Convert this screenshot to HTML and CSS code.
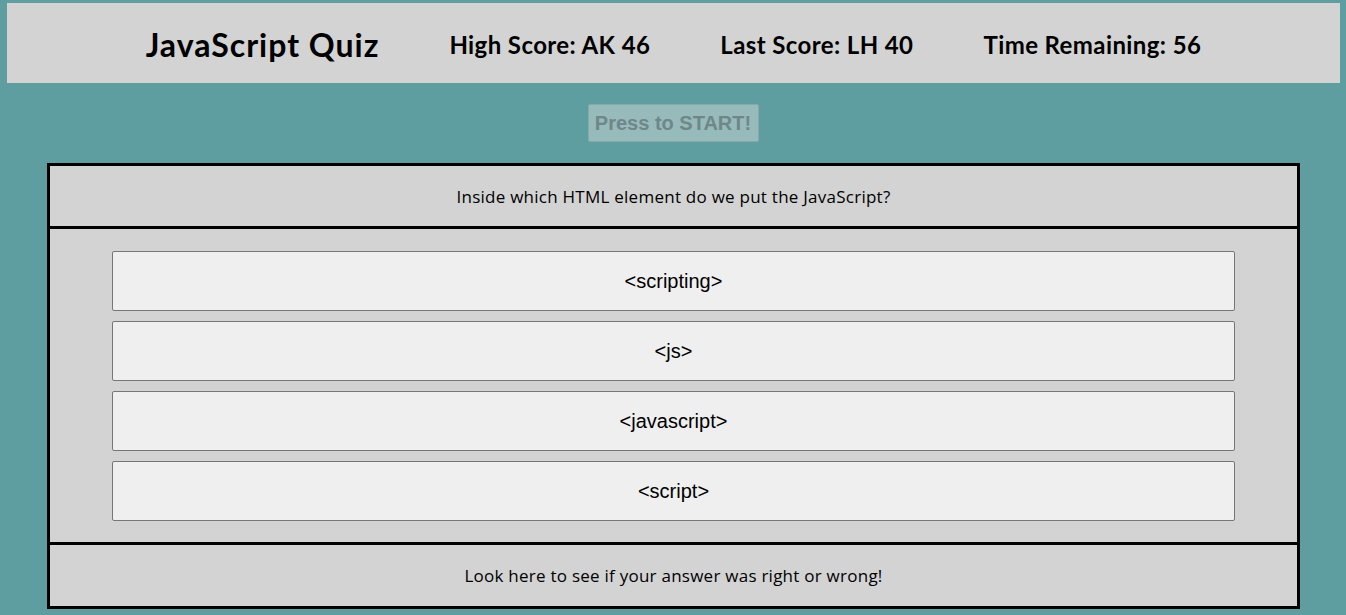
FILE: index.html
```html
<!DOCTYPE html>
<html lang="en">
<head>
<meta charset="utf-8">
<title>JavaScript Quiz</title>
<link rel="stylesheet" href="styles.css">
</head>
<body>
<header class="top-bar">
  <h1 class="title">JavaScript Quiz</h1>
  <div class="stat">High Score: AK 46</div>
  <div class="stat">Last Score: LH 40</div>
  <div class="stat">Time Remaining: 56</div>
</header>
<div class="start-row">
  <button class="start-btn" disabled>Press to START!</button>
</div>
<main class="quiz">
  <section class="question">Inside which HTML element do we put the JavaScript?</section>
  <section class="answers">
    <button class="answer">&lt;scripting&gt;</button>
    <button class="answer">&lt;js&gt;</button>
    <button class="answer">&lt;javascript&gt;</button>
    <button class="answer">&lt;script&gt;</button>
  </section>
  <section class="feedback">Look here to see if your answer was right or wrong!</section>
</main>
</body>
</html>
```
FILE: styles.css
```css
html, body {
  margin: 0;
  padding: 0;
}
body {
  background: #5f9ea0;
  font-family: "Lato", "Open Sans", sans-serif;
  color: #000;
}
.top-bar {
  margin: 3px 6px 0 7px;
  height: 80px;
  box-sizing: border-box;
  padding-top: 2px;
  background: #d3d3d3;
  display: flex;
  justify-content: center;
  align-items: center;
  gap: 70px;
}
.title {
  margin: 0;
  font-size: 32px;
  font-weight: bold;
  letter-spacing: 1px;
}
.stat {
  font-size: 24px;
  font-weight: bold;
  letter-spacing: 0.4px;
}
.start-row {
  display: flex;
  justify-content: center;
  margin-top: 21px;
}
.start-btn {
  width: 171px;
  height: 38px;
  background: #97baba;
  border: 1px solid #87a9aa;
  border-radius: 2px;
  color: #6f8788;
  font-family: "Liberation Sans", Arial, sans-serif;
  font-weight: bold;
  font-size: 20px;
  padding: 0;
}
.quiz {
  margin: 21px 46px 0 47px;
  border: 3px solid #000;
  background: #d3d3d3;
}
.question,
.feedback {
  display: flex;
  align-items: center;
  justify-content: center;
  font-family: "Open Sans", "Lato", sans-serif;
  font-size: 17px;
  letter-spacing: 0.25px;
}
.question {
  height: 60px;
  border-bottom: 3px solid #000;
}
.answers {
  padding: 22px 0 21px;
  display: flex;
  flex-direction: column;
  align-items: center;
  gap: 10px;
  border-bottom: 3px solid #000;
}
.answer {
  width: 1123px;
  height: 60px;
  background: #efefef;
  border: 1px solid #767676;
  border-radius: 2px;
  font-family: "Liberation Sans", Arial, sans-serif;
  font-size: 20px;
  color: #000;
}
.feedback {
  height: 61px;
}
```
